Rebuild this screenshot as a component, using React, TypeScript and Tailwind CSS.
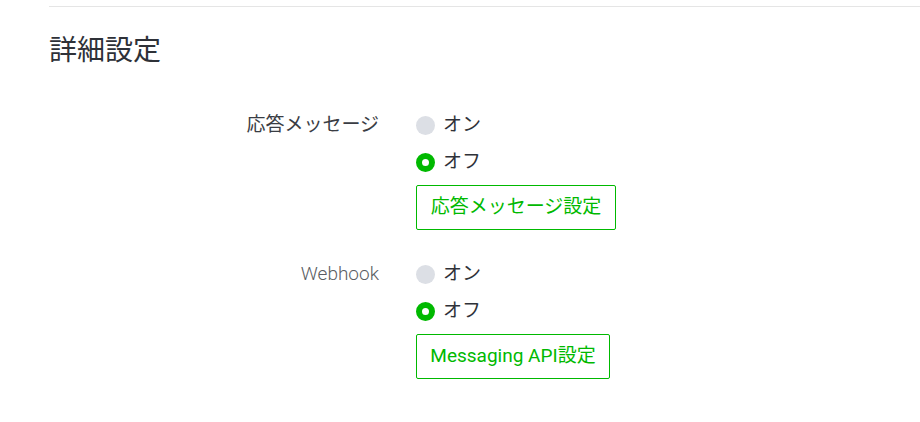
import { useState } from "react";

interface Setting {
  label: string;
  latin?: boolean;
  button: string;
  buttonWidth: string;
}

const settings: Setting[] = [
  { label: "応答メッセージ", button: "応答メッセージ設定", buttonWidth: "w-[200px]" },
  { label: "Webhook", latin: true, button: "Messaging API設定", buttonWidth: "w-[194px]" },
];

function Radio({ checked, label, onClick }: { checked: boolean; label: string; onClick: () => void }) {
  return (
    <button onClick={onClick} className="flex items-center h-7 gap-[8px] text-left">
      {checked ? (
        <span className="w-[19px] h-[19px] rounded-full border-[6px] border-[#00b900] bg-white" />
      ) : (
        <span className="w-[19px] h-[19px] rounded-full bg-[#dcdfe5]" />
      )}
      <span className="text-[19px] text-[#2e3138]">{label}</span>
    </button>
  );
}

function SettingRow({ setting }: { setting: Setting }) {
  const [on, setOn] = useState(false);
  return (
    <div className="flex">
      <div
        className={
          setting.latin
            ? "w-[330px] h-7 flex items-center justify-end text-[19px] text-[#5a5d63] font-light"
            : "w-[330px] h-7 flex items-center justify-end text-[19px] text-[#3a3d44]"
        }
      >
        {setting.label}
      </div>
      <div className="ml-[37px] flex flex-col gap-[9px]">
        <Radio checked={on} label="オン" onClick={() => setOn(true)} />
        <Radio checked={!on} label="オフ" onClick={() => setOn(false)} />
        <button
          className={`${setting.buttonWidth} h-[45px] border border-[#00b900] rounded-[2px] text-[#00b900] text-[19px] bg-white`}
        >
          {setting.button}
        </button>
      </div>
    </div>
  );
}

export default function App() {
  return (
    <div
      className="w-[920px] h-[422px] bg-white pt-[6px] overflow-hidden"
      style={{ fontFamily: 'Roboto, "Noto Sans CJK JP", sans-serif' }}
    >
      <div className="ml-[49px] border-t border-[#e5e5e5]">
        <h2 className="mt-[26px] text-[28px] leading-[36px] text-[#2e3138]">詳細設定</h2>
        <div className="mt-[42px] flex flex-col gap-[30px]">
          {settings.map((s) => (
            <SettingRow key={s.label} setting={s} />
          ))}
        </div>
      </div>
    </div>
  );
}
